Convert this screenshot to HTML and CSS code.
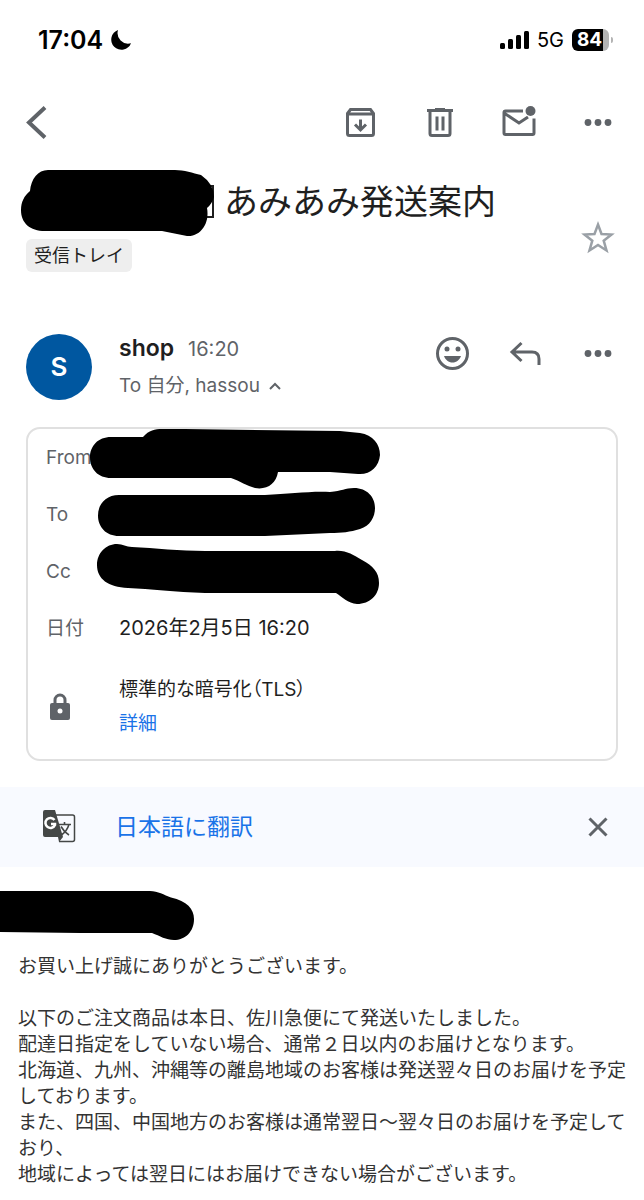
FILE: index.html
```html
<!DOCTYPE html>
<html lang="ja">
<head>
<meta charset="utf-8">
<meta name="viewport" content="width=device-width, initial-scale=1">
<title>あみあみ発送案内</title>
<link rel="stylesheet" href="styles.css">
</head>
<body>
<div class="status">
  <div class="status-side">
    <span class="clock">17:04</span>
    <svg width="20" height="20" viewBox="0 0 20 20"><path fill="#000" d="M7 0A10.200 10.200 0 1 0 20 13.200A10.600 10.600 0 0 1 7 0Z"/></svg>
  </div>
  <div class="status-side">
    <svg width="29" height="20" viewBox="0 0 29 20"><rect x="0" y="13" width="5" height="6" rx="1.500"/><rect x="8" y="9" width="5" height="10" rx="1.500"/><rect x="16" y="5" width="5" height="14" rx="1.500"/><rect x="24" y="1" width="5" height="18" rx="1.500"/></svg>
    <span class="network">5G</span>
    <div class="battery"><span class="battery-level">84</span></div>
  </div>
</div>

<header class="toolbar">
  <button class="icon back" aria-label="戻る"><svg viewBox="0 0 40 40"><path class="line thick" d="M29 5.500 13 20.500 29 35.500"/></svg></button>
  <button class="icon" aria-label="アーカイブ"><svg viewBox="0 0 40 40"><path class="line" d="M6.500 11.500 9.500 7.500H29.500L32.500 11.500V31.500Q32.500 33.500 30.500 33.500H8.500Q6.500 33.500 6.500 31.500ZM6.500 12H32.500M19.500 17.500V28"/><path class="line" d="M14 22.500 19.500 28 25 22.500"/></svg></button>
  <button class="icon" aria-label="削除"><svg viewBox="0 0 40 40"><path class="line" d="M7 8.500H33M10 9V31.500Q10 33.500 12 33.500H28Q30 33.500 30 31.500V9M17 14.500V28.500M23 14.500V28.500"/><path class="fill" d="M15 6h10v3H15z"/></svg></button>
  <button class="icon" aria-label="未読にする"><svg viewBox="0 0 40 40"><path class="line" d="M24 9H6.500Q5 9 5 10.500V31Q5 32.500 6.500 32.500H33.500Q35 32.500 35 31V16.500M5 11 20 21 29 15"/><circle class="fill" cx="31.500" cy="9" r="5"/></svg></button>
  <button class="icon" aria-label="その他"><svg viewBox="0 0 40 40"><g class="fill"><circle cx="10" cy="20.500" r="3.400"/><circle cx="20" cy="20.500" r="3.400"/><circle cx="30" cy="20.500" r="3.400"/></g></svg></button>
</header>

<main>
  <section class="subject">
    <div class="subject-main">
      <h1 class="title">
        <span class="title-hidden"><svg class="ink ink-title" width="196" height="70" viewBox="21 168 196 70"><path fill="none" stroke="#1f1f1f" stroke-width="2" d="M206 186H213V217H206"/><path d="M48 170H175C184 170 193 173 201 175Q214 184 214 197Q212 204 207 208C210 224 200 237 187 236L162 231H45C30 231 21 223 21 210C21 202 24 196 30 191C31 179 38 170 48 170Z"/></svg></span><span>あみあみ発送案内</span>
      </h1>
      <span class="chip">受信トレイ</span>
    </div>
    <button class="icon star" aria-label="スターを付ける"><svg viewBox="0 0 40 40"><path d="M20 6.500 23.500 16 33.500 16.500 25.700 22.700 28.500 32.500 20 27 11.500 32.500 14.300 22.700 6.500 16.500 16.500 16Z"/></svg></button>
  </section>

  <section class="sender">
    <div class="avatar">S</div>
    <div class="sender-text">
      <div class="sender-line"><span class="name">shop</span><span class="time">16:20</span></div>
      <button class="recipients">To 自分, hassou<svg width="12" height="8" viewBox="0 0 12 8"><path class="line thin" d="M1 7 6 2 11 7"/></svg></button>
    </div>
    <div class="sender-actions">
      <button class="icon" aria-label="リアクション"><svg viewBox="0 0 40 40"><circle class="line" cx="20.500" cy="20.500" r="15"/><g class="fill"><circle cx="15" cy="16" r="2.500"/><circle cx="26" cy="16" r="2.500"/><path d="M12 23H29C27.500 27 24.500 29.500 20.500 29.500S13.500 27 12 23Z"/></g></svg></button>
      <button class="icon" aria-label="返信"><svg viewBox="0 0 40 40"><path class="line" d="M16.500 10 7 19 16.500 28M7 19H27Q34 19 34 26V32"/></svg></button>
      <button class="icon" aria-label="その他"><svg viewBox="0 0 40 40"><g class="fill"><circle cx="10" cy="20.500" r="3.400"/><circle cx="20" cy="20.500" r="3.400"/><circle cx="30" cy="20.500" r="3.400"/></g></svg></button>
    </div>
  </section>

  <section class="card">
    <dl class="details">
      <dt>From</dt>
      <dd><svg class="ink ink-from" width="290" height="60" viewBox="90 429 290 60"><path d="M111 437H143C149 430 155 429 162 429H185L340 431L360 433C373 435 380 444 380 455C379 467 370 475 358 474L330 472H278C276 484 267 490 255 488C247 486 240 481 231 478H111C98 478 90 469 90 457.500S98 437 111 437Z"/></svg></dd>
      <dt>To</dt>
      <dd><svg class="ink ink-to" width="278" height="50" viewBox="98 487 278 50"><path d="M119 495H265C290 494 310 491 330 492C342 491 345 488 354 488C367 488 375 497 375 508C375 517 370 526 360 529C350 532 342 533 330 533L265 536H119C106 536 98 527 98 515.500S106 495 119 495Z"/></svg></dd>
      <dt>Cc</dt>
      <dd><svg class="ink ink-cc" width="283" height="61" viewBox="97 543 283 61"><path d="M117 544C123 544 126 547 132 547C155 548 180 551 205 551H335C346 550 353 555 362 560C373 566 379 572 379 583C379 595 370 604 357 604C348 603 342 597 336 593H205C175 592 150 589 128 588C108 587 97 579 97 565C97 553 106 544 117 544Z"/></svg></dd>
      <dt>日付</dt>
      <dd class="date">2026年2月5日 16:20</dd>
    </dl>
    <div class="security">
      <svg class="lock" width="28" height="28" viewBox="0 0 28 28"><rect class="fill" x="4" y="10" width="20" height="17" rx="2"/><path class="line" d="M9 11V7A5 5 0 0 1 19 7V11"/><circle cx="14" cy="18" r="2.500" fill="#fff"/></svg>
      <div class="security-text"><div>標準的な暗号化（TLS）</div><a href="#">詳細</a></div>
    </div>
  </section>

  <section class="translate">
    <svg class="translate-icon" width="34" height="34" viewBox="0 0 34 34"><path d="M14 5H30.500Q32.500 5 32.500 7V29.500Q32.500 31.500 30.500 31.500H17" fill="none" stroke="#444746" stroke-width="1.500"/><path fill="#444746" d="M3 0H13L21 27H3Q1 27 1 25V2Q1 0 3 0ZM16 27H21L17 32Z"/><path d="M12.500 10A5 5 0 1 0 13 15V14H9" fill="none" stroke="#fff" stroke-width="2.500"/><path d="M17 14.500H29M22.500 12V14.500M27 14.500Q25 21 19.500 25M19 16.500Q22 22 27 25" fill="none" stroke="#444746" stroke-width="1.600"/></svg>
    <a class="translate-link" href="#">日本語に翻訳</a>
    <button class="icon" aria-label="閉じる"><svg viewBox="0 0 40 40"><path class="line thin" d="M11.500 11.500 28.500 28.500M28.500 11.500 11.500 28.500"/></svg></button>
  </section>

  <article class="message">
    <svg class="message-hidden" width="195" height="49" viewBox="0 0 195 49"><path d="M0 0H150C158 0 164 4 171 6.500C187 10 194 18 194 28C194 41 185 49 174 49C166 49 160 45 152 42H80L0 41Z"/></svg>
    <p>お買い上げ誠にありがとうございます。</p>
    <p>以下のご注文商品は本日、佐川急便にて発送いたしました。<br>配達日指定をしていない場合、通常２日以内のお届けとなります。<br>北海道、九州、沖縄等の離島地域のお客様は発送翌々日のお届けを予定しております。<br>また、四国、中国地方のお客様は通常翌日～翌々日のお届けを予定しており、<br>地域によっては翌日にはお届けできない場合がございます。</p>
  </article>
</main>
</body>
</html>
```
FILE: styles.css
```css
* { box-sizing: border-box; }
body {
  margin: 0;
  background: #fff;
  color: #1f1f1f;
  font: 18px/38px Inter, "Noto Sans CJK JP", sans-serif;
}
svg { display: block; flex: none; }
a { color: #1a73e8; text-decoration: none; }
button { padding: 0; border: 0; background: none; color: inherit; font: inherit; cursor: pointer; }

.line { fill: none; stroke: #5f6368; stroke-width: 3; }
.thick { stroke-width: 4; }
.thin { stroke-width: 2; }
.fill { fill: #5f6368; }
.icon { flex: none; width: 40px; height: 40px; }
.icon .thin { stroke-width: 3; }

.status {
  display: flex;
  justify-content: space-between;
  height: 80px;
  padding: 0 35px 0 38px;
  color: #000;
}
.status-side { display: flex; align-items: center; gap: 8px; }
.clock { font-size: 25px; font-weight: 600; }
.network { font-size: 20px; }
.battery {
  position: relative;
  width: 37px;
  height: 22px;
  border-radius: 6px;
  background: linear-gradient(90deg, #000 31px, #b3b3b3 31px);
}
.battery::after {
  content: "";
  position: absolute;
  top: 8px;
  right: -4px;
  width: 2px;
  height: 6px;
  border-radius: 0 2px 2px 0;
  background: #b3b3b3;
}
.battery-level {
  display: block;
  padding-left: 5px;
  color: #fff;
  font-size: 19px;
  font-weight: 700;
  line-height: 22px;
}

.toolbar { display: flex; align-items: center; gap: 39px; height: 84px; padding: 0 26px 0 16px; }
.back { margin-right: auto; }

.subject { display: flex; align-items: flex-end; padding: 14px 26px 0; }
.subject-main { flex: 1; }
.title {
  display: flex;
  margin: 0;
  font-size: 34px;
  font-weight: 400;
  line-height: 48px;
}
.title-hidden { position: relative; width: 198px; }
.ink { position: absolute; }
.ink-title { left: -5px; top: -10px; }
.chip {
  display: block;
  width: fit-content;
  height: 33px;
  margin-top: 13px;
  padding: 0 8px;
  border-radius: 6px;
  background: #eee;
  line-height: 33px;
}
.star { margin-bottom: 14px; }
.star path { fill: none; stroke: #9aa0a6; stroke-width: 2.5; }

.sender { display: flex; align-items: center; margin-top: 57px; padding: 0 26px; }
.avatar {
  flex: none;
  width: 66px;
  height: 66px;
  border-radius: 50%;
  background: #0057a0;
  color: #fff;
  font-size: 26px;
  font-weight: 600;
  line-height: 66px;
  text-align: center;
}
.sender-text { flex: 1; margin-left: 27px; }
.sender-line { display: flex; align-items: baseline; height: 38px; }
.name { font-size: 23px; font-weight: 600; }
.time { margin-left: 14px; color: #5f6368; font-size: 20px; }
.recipients { display: flex; align-items: center; gap: 9px; height: 38px; color: #5f6368; font-size: 19px; }
.sender-actions { display: flex; align-self: flex-start; gap: 33px; margin-top: 4px; }

.card {
  margin: 22px 26px 0;
  padding: 0 18px 18px;
  border: 2px solid #e0e0e0;
  border-radius: 14px;
}
.details { display: grid; grid-template-columns: 73px 1fr; margin: 0; line-height: 57px; }
.details dt { color: #5f6368; font-size: 19px; }
.details dd { position: relative; min-height: 57px; margin: 0; }
.date { font-size: 20px; }
.ink-from { left: -29px; top: 0; }
.ink-to { left: -21px; top: 1px; }
.ink-cc { left: -22px; top: 0; }
.security { display: flex; align-items: center; margin-top: 16px; line-height: 34px; }
.lock { margin-right: 45px; }
.security-text { font-size: 19px; font-feature-settings: "palt"; }

.translate { display: flex; align-items: center; height: 80px; margin-top: 26px; padding: 0 26px 0 42px; background: #f8faff; }
.translate-link { flex: 1; margin-left: 39px; font-size: 23px; }

.message {
  padding: 24px 16px 24px 18px;
  color: #333;
  font-family: "Noto Sans CJK JP", sans-serif;
  font-size: 19px;
  line-height: 26px;
}
.message-hidden { margin: 0 0 12px -18px; }
.message p { margin: 0 0 26px; }
```
